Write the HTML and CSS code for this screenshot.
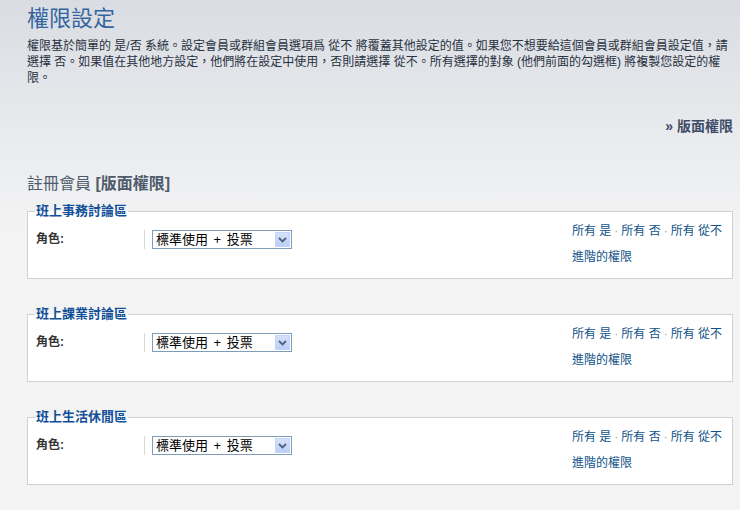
FILE: index.html
```html
<!DOCTYPE html>
<html lang="zh-Hant">
<head>
    <meta charset="UTF-8">
    <title>權限設定</title>
    <link rel="stylesheet" href="styles.css">
</head>
<body>
    <div class="page">
        <!-- Page header -->
        <h1 class="page-title">權限設定</h1>
        <p class="page-desc">權限基於簡單的 是/否 系統。設定會員或群組會員選項爲 從不 將覆蓋其他設定的值。如果您不想要給這個會員或群組會員設定值，請選擇 否。如果值在其他地方設定，他們將在設定中使用，否則請選擇 從不。所有選擇的對象 (他們前面的勾選框) 將複製您設定的權限。</p>

        <div class="switch-link"><a href="#">» 版面權限</a></div>

        <h2 class="group-title">註冊會員 <span class="group-mode">[版面權限]</span></h2>

        <!-- One fieldset per forum -->
        <div class="forums">
            <fieldset class="forum">
                <legend>班上事務討論區</legend>
                <div class="forum-row">
                    <div class="role">
                        <label class="role-label">角色:</label>
                        <div class="select">
                            <span class="select-text">標準使用 + 投票</span>
                            <span class="select-btn"><svg width="9" height="6" viewBox="0 0 9 6"><path d="M1 1l3.5 3.5L8 1" fill="none" stroke="#4d6185" stroke-width="1.8"/></svg></span>
                        </div>
                    </div>
                    <div class="actions">
                        <div><a href="#">所有 是</a><span class="sep">·</span><a href="#">所有 否</a><span class="sep">·</span><a href="#">所有 從不</a></div>
                        <div><a href="#">進階的權限</a></div>
                    </div>
                </div>
            </fieldset>

            <fieldset class="forum">
                <legend>班上課業討論區</legend>
                <div class="forum-row">
                    <div class="role">
                        <label class="role-label">角色:</label>
                        <div class="select">
                            <span class="select-text">標準使用 + 投票</span>
                            <span class="select-btn"><svg width="9" height="6" viewBox="0 0 9 6"><path d="M1 1l3.5 3.5L8 1" fill="none" stroke="#4d6185" stroke-width="1.8"/></svg></span>
                        </div>
                    </div>
                    <div class="actions">
                        <div><a href="#">所有 是</a><span class="sep">·</span><a href="#">所有 否</a><span class="sep">·</span><a href="#">所有 從不</a></div>
                        <div><a href="#">進階的權限</a></div>
                    </div>
                </div>
            </fieldset>

            <fieldset class="forum">
                <legend>班上生活休閒區</legend>
                <div class="forum-row">
                    <div class="role">
                        <label class="role-label">角色:</label>
                        <div class="select">
                            <span class="select-text">標準使用 + 投票</span>
                            <span class="select-btn"><svg width="9" height="6" viewBox="0 0 9 6"><path d="M1 1l3.5 3.5L8 1" fill="none" stroke="#4d6185" stroke-width="1.8"/></svg></span>
                        </div>
                    </div>
                    <div class="actions">
                        <div><a href="#">所有 是</a><span class="sep">·</span><a href="#">所有 否</a><span class="sep">·</span><a href="#">所有 從不</a></div>
                        <div><a href="#">進階的權限</a></div>
                    </div>
                </div>
            </fieldset>
        </div>
    </div>
</body>
</html>
```

FILE: styles.css
```css
html, body {
    margin: 0;
    height: 100%;
}

body {
    font-family: "Liberation Sans", "Noto Sans CJK TC", sans-serif;
    font-size: 12px;
    color: #28313f;
    background: linear-gradient(#d9dce2 0, #e9ebee 140px, #f3f3f3 230px);
}

a {
    color: #105289;
    text-decoration: none;
}

.page {
    padding: 4px 7px 0 27px;
}

/* Header */
.page-title {
    margin: 0;
    font-size: 22px;
    font-weight: normal;
    line-height: 30px;
    color: #3565a0;
}

.page-desc {
    margin: 4px 0 0;
    line-height: 16px;
    padding-right: 4px;
}

.switch-link {
    margin-top: 32px;
    text-align: right;
    font-size: 14px;
    font-weight: bold;
    line-height: 16px;
}

.switch-link a {
    color: #3d4b66;
}

.group-title {
    margin: 40px 0 0;
    font-size: 16px;
    font-weight: normal;
    line-height: 20px;
    color: #4d5b6c;
}

.group-mode {
    font-weight: bold;
}

/* Forum fieldsets */
.forums {
    display: flex;
    flex-direction: column;
    gap: 28px;
    margin-top: 10px;
}

.forum {
    margin: 0;
    padding: 3px 8px 13px;
    border: 1px solid #cfd1d4;
    background: #fff;
}

.forum legend {
    padding: 0 1px;
    margin-left: -1px;
    font-size: 13px;
    font-weight: bold;
    line-height: 14px;
    color: #115098;
}

.forum-row {
    display: flex;
    justify-content: space-between;
    align-items: flex-start;
}

.role {
    display: flex;
    align-items: center;
    margin-top: 9px;
}

.role-label {
    width: 108px;
    height: 19px;
    line-height: 19px;
    font-weight: bold;
    color: #333;
    border-right: 1px solid #d6d8da;
}

.select {
    display: flex;
    align-items: center;
    justify-content: space-between;
    width: 138px;
    height: 17px;
    margin-left: 7px;
    border: 1px solid #7f9db9;
    background: #fff;
    color: #000;
    font-size: 13px;
}

.select-text {
    padding-left: 3px;
    line-height: 17px;
    word-spacing: 2px;
}

.select-btn {
    display: flex;
    align-items: center;
    justify-content: center;
    width: 15px;
    height: 15px;
    margin-right: 1px;
    border-radius: 1px;
    background: linear-gradient(#d8e3fb, #b9cdf5);
    box-shadow: inset 0 0 0 1px #c3d3fd;
}

.actions {
    display: flex;
    flex-direction: column;
    gap: 10px;
    width: 152px;
    margin-top: 2px;
    line-height: 16px;
    white-space: nowrap;
}

.sep {
    padding: 0 3px;
    color: #9aa3ad;
}
```
